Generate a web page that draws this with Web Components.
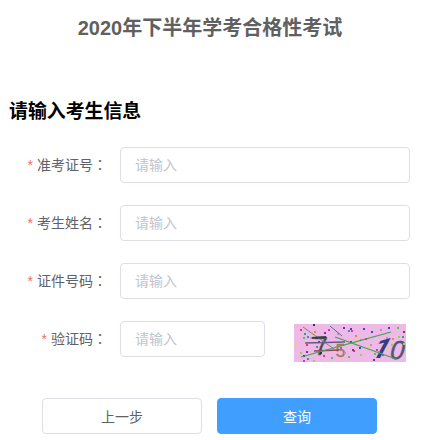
<!DOCTYPE html>
<html lang="zh-CN">
<head>
<meta charset="utf-8">
<title>2020年下半年学考合格性考试</title>
<style>
  body {
    margin: 0;
    background: #fff;
    font-family: "Liberation Sans", "Noto Sans CJK SC", sans-serif;
    font-size: 14px;
    color: #606266;
  }
</style>
</head>
<body>
<exam-page heading="2020年下半年学考合格性考试" subheading="请输入考生信息">
  <form-item label="准考证号"><text-field placeholder="请输入"></text-field></form-item>
  <form-item label="考生姓名"><text-field placeholder="请输入"></text-field></form-item>
  <form-item label="证件号码"><text-field placeholder="请输入"></text-field></form-item>
  <form-item label="验证码">
    <text-field placeholder="请输入" style="flex: 0 0 145px"></text-field>
    <captcha-image></captcha-image>
  </form-item>
  <action-button slot="actions">上一步</action-button>
  <action-button slot="actions" type="primary">查询</action-button>
</exam-page>

<script>
  class ExamPage extends HTMLElement {
    constructor() {
      super();
      this.attachShadow({ mode: "open" }).innerHTML = `
        <style>
          :host { display: block; width: 400px; padding: 13px 0 0 10px; }
          h1 { margin: 0; font-size: 20px; line-height: 30px; text-align: center; color: #606060; }
          h3 { margin: 54px 0 0 -1px; font-size: 18.9px; line-height: 30px; color: #000; }
          .form { display: flex; flex-direction: column; gap: 22px; margin-top: 20px; }
          .actions { display: flex; gap: 15px; margin: 41px 0 0 32px; }
        </style>
        <h1></h1>
        <h3></h3>
        <div class="form"><slot></slot></div>
        <div class="actions"><slot name="actions"></slot></div>`;
    }
    connectedCallback() {
      this.shadowRoot.querySelector("h1").textContent = this.getAttribute("heading");
      this.shadowRoot.querySelector("h3").textContent = this.getAttribute("subheading");
    }
  }
  customElements.define("exam-page", ExamPage);

  class FormItem extends HTMLElement {
    constructor() {
      super();
      this.attachShadow({ mode: "open" }).innerHTML = `
        <style>
          :host { display: flex; height: 36px; }
          label { box-sizing: border-box; display: flex; justify-content: flex-end; flex: 0 0 110px; padding-right: 13px; line-height: 36px; white-space: nowrap; }
          .star { margin-right: 4px; color: #f56c6c; }
          .colon { font-family: "Noto Sans CJK TC", sans-serif; line-height: 35px; }
          .content { display: flex; flex: 1; min-width: 0; }
        </style>
        <label><span class="star">*</span><span class="text"></span><span class="colon" lang="zh-TW">：</span></label>
        <div class="content"><slot></slot></div>`;
    }
    connectedCallback() {
      this.shadowRoot.querySelector(".text").textContent = this.getAttribute("label");
    }
  }
  customElements.define("form-item", FormItem);

  class TextField extends HTMLElement {
    constructor() {
      super();
      this.attachShadow({ mode: "open" }).innerHTML = `
        <style>
          :host { display: block; flex: 1; }
          input {
            box-sizing: border-box;
            display: block;
            width: 100%;
            height: 36px;
            padding: 0 14px;
            border: 1px solid #dcdfe6;
            border-radius: 4px;
            outline: none;
            background: #fff;
            font: inherit;
            color: inherit;
          }
          input::placeholder { color: #c0c4cc; }
        </style>
        <input type="text" autocomplete="off">`;
    }
    connectedCallback() {
      this.shadowRoot.querySelector("input").placeholder = this.getAttribute("placeholder") || "";
    }
  }
  customElements.define("text-field", TextField);

  class ActionButton extends HTMLElement {
    constructor() {
      super();
      this.attachShadow({ mode: "open" }).innerHTML = `
        <style>
          :host { display: block; }
          button {
            display: block;
            width: 160px;
            height: 36px;
            padding: 0;
            border: 1px solid #dcdfe6;
            border-radius: 4px;
            background: #fff;
            font: inherit;
            color: #606266;
            cursor: pointer;
          }
          :host([type="primary"]) button { border-color: #409eff; background: #409eff; color: #fff; }
        </style>
        <button type="button"><slot></slot></button>`;
    }
  }
  customElements.define("action-button", ActionButton);

  // noise dots, x y per colour
  const DOTS = {
    "#e0443c": [[6,5],[71,14],[12,20],[59,26],[29,31]],
    "#2f9b9b": [[10,9],[13,12],[54,6],[13,34],[108,12],[22,22]],
    "#3a48b8": [[69,4],[77,7],[94,3],[56,17],[65,23],[24,17]],
    "#7a2f9c": [[49,3],[56,4],[30,8],[12,27],[58,25],[79,35],[109,7]],
    "#e8dc30": [[1,20],[50,16],[62,16],[74,22],[91,24]],
    "#43cf55": [[9,13],[37,33],[80,29],[54,32],[103,3],[84,27]],
    "#8fdc2b": [[104,12],[109,19],[66,30],[97,20],[19,36],[6,28]],
    "#d637bd": [[57,6],[34,5],[46,23],[82,25],[9,36],[88,30]],
    "#e88a37": [[66,15],[20,7],[98,14],[61,11]],
    "#38313f": [[19,0],[9,31],[26,28]],
    "#c98bb8": [[16,13],[43,9],[76,20],[92,13],[50,28],[86,5]]
  };

  class CaptchaImage extends HTMLElement {
    constructor() {
      super();
      let dots = "";
      for (const color in DOTS) {
        for (const [x, y] of DOTS[color]) {
          dots += `<rect x="${x}" y="${y}" width="2" height="2" fill="${color}"/>`;
        }
      }
      this.attachShadow({ mode: "open" }).innerHTML = `
        <style>
          :host { display: block; margin: 3px 0 0 29px; }
          svg { display: block; overflow: visible; }
          text { font-family: "Liberation Sans", sans-serif; }
        </style>
        <svg width="112" height="38" viewBox="0 0 112 38">
          <rect width="112" height="38" fill="#eeb9e6"/>
          <text font-size="25" fill="#454d4f" stroke="#454d4f" stroke-width=".4" transform="translate(20 30.5)">7</text>
          <text x="41.5" y="33" font-size="18" fill="#a0804f" stroke="#a0804f" stroke-width=".3">5</text>
          <text font-size="28" font-weight="bold" fill="#323f80" style="font-family: Roboto, sans-serif" transform="translate(75 34) skewX(-28)">1</text>
          <text font-size="26" fill="#505770" stroke="#505770" stroke-width=".4" transform="translate(94.5 34.5) skewX(-14)">0</text>
          ${dots}
          <g fill="none">
            <path d="M9 3L40 25" stroke="#72906f"/>
            <path d="M36 2L48 12" stroke="#3b7da0"/>
            <path d="M18 14L32 13" stroke="#35404c" stroke-width="2"/>
            <path d="M11 19L51 18" stroke="#6d548d" stroke-width="1.5"/>
            <path d="M20 27L45 26" stroke="#8d4962" stroke-width="1.5"/>
            <path d="M7 33L97 8M41 13L102 35" stroke="#3ca657" stroke-width="1.2"/>
          </g>
        </svg>`;
    }
  }
  customElements.define("captcha-image", CaptchaImage);
</script>
</body>
</html>
